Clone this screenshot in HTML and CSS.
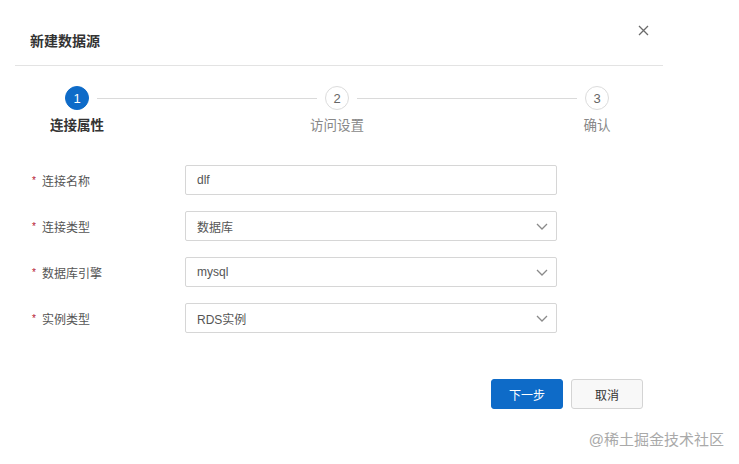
FILE: index.html
```html
<!DOCTYPE html>
<html lang="zh">
<head>
<meta charset="utf-8">
<title>新建数据源</title>
<link rel="stylesheet" href="styles.css">
</head>
<body>
<div class="dialog">
  <div class="header">
    <div class="title">新建数据源</div>
    <button class="close" aria-label="关闭">
      <svg width="11" height="11" viewBox="0 0 11 11"><path d="M1 1L10 10M10 1L1 10" stroke="#6b6b6b" stroke-width="1.3" fill="none"/></svg>
    </button>
  </div>

  <div class="steps">
    <div class="step active">
      <div class="dot">1</div>
      <div class="step-label">连接属性</div>
    </div>
    <div class="connector"></div>
    <div class="step">
      <div class="dot">2</div>
      <div class="step-label">访问设置</div>
    </div>
    <div class="connector"></div>
    <div class="step">
      <div class="dot">3</div>
      <div class="step-label">确认</div>
    </div>
  </div>

  <div class="form">
    <div class="row">
      <div class="label"><span class="req">*</span>连接名称</div>
      <div class="field">dlf</div>
    </div>
    <div class="row">
      <div class="label"><span class="req">*</span>连接类型</div>
      <div class="field select">数据库
        <svg class="chev" width="12" height="7" viewBox="0 0 12 7"><path d="M1 1L6 6L11 1" stroke="#8a8a8a" stroke-width="1.3" fill="none"/></svg>
      </div>
    </div>
    <div class="row">
      <div class="label"><span class="req">*</span>数据库引擎</div>
      <div class="field select">mysql
        <svg class="chev" width="12" height="7" viewBox="0 0 12 7"><path d="M1 1L6 6L11 1" stroke="#8a8a8a" stroke-width="1.3" fill="none"/></svg>
      </div>
    </div>
    <div class="row">
      <div class="label"><span class="req">*</span>实例类型</div>
      <div class="field select">RDS实例
        <svg class="chev" width="12" height="7" viewBox="0 0 12 7"><path d="M1 1L6 6L11 1" stroke="#8a8a8a" stroke-width="1.3" fill="none"/></svg>
      </div>
    </div>
  </div>

  <div class="footer">
    <button class="btn primary">下一步</button>
    <button class="btn">取消</button>
  </div>
</div>
<div class="watermark">@稀土掘金技术社区</div>
</body>
</html>
```

FILE: styles.css
```css
* { box-sizing: border-box; }
html, body {
  margin: 0;
  padding: 0;
  background: #fff;
  font-family: "Liberation Sans", "Noto Sans CJK SC", sans-serif;
  color: #333;
}
.dialog {
  margin-left: 15px;
  width: 648px;
}
.header {
  display: flex;
  justify-content: space-between;
  align-items: flex-start;
  height: 66px;
  border-bottom: 1px solid #e3e3e3;
  padding: 0 15px;
}
.title {
  margin-top: 31px;
  font-size: 14px;
  line-height: 20px;
  font-weight: bold;
  color: #333;
}
.close {
  margin-top: 24px;
  margin-right: -1px;
  width: 12px;
  height: 12px;
  padding: 0;
  border: 0;
  background: none;
  display: flex;
  align-items: center;
  justify-content: center;
}
.steps {
  display: flex;
  align-items: flex-start;
  margin: 20px 0 0 50px;
  width: 544px;
}
.step {
  width: 24px;
  display: flex;
  flex-direction: column;
  align-items: center;
}
.dot {
  width: 24px;
  height: 24px;
  border-radius: 50%;
  border: 1px solid #dcdcdc;
  background: #fff;
  color: #666;
  font-size: 13px;
  display: flex;
  align-items: center;
  justify-content: center;
}
.step.active .dot {
  background: #0e6bc8;
  border-color: #0e6bc8;
  color: #fff;
}
.step-label {
  margin-top: 6px;
  white-space: nowrap;
  font-size: 13.5px;
  line-height: 20px;
  color: #888;
}
.step.active .step-label {
  color: #333;
  font-weight: bold;
}
.connector {
  flex: 1;
  height: 1px;
  background: #dadada;
  margin: 12px 8px 0;
}
.form {
  margin-top: 29px;
  padding-left: 17px;
  display: flex;
  flex-direction: column;
  gap: 16px;
}
.row {
  display: flex;
  align-items: center;
}
.label {
  width: 153px;
  font-size: 12px;
  color: #555;
  display: flex;
  align-items: center;
}
.req {
  color: #b5172f;
  width: 10px;
  font-size: 10px;
}
.field {
  width: 372px;
  height: 30px;
  border: 1px solid #d6d6d6;
  border-radius: 2px;
  padding: 0 11px;
  font-size: 12px;
  color: #555;
  display: flex;
  align-items: center;
  justify-content: space-between;
}
.chev { margin-right: -3px; }
.footer {
  margin-top: 46px;
  display: flex;
  justify-content: flex-end;
  gap: 8px;
  padding-right: 20px;
}
.btn {
  width: 72px;
  height: 30px;
  border: 1px solid #d4d4d4;
  border-radius: 3px;
  background: #f8f8f8;
  color: #333;
  font-family: "Liberation Sans", "Noto Sans CJK SC", sans-serif;
  font-size: 12px;
  padding: 0;
}
.btn.primary {
  background: #0e6bc8;
  border-color: #0e6bc8;
  color: #fff;
}
.watermark {
  margin-top: 21px;
  width: 724px;
  text-align: right;
  font-size: 15px;
  line-height: 20px;
  color: #a9a9a9;
}
```
